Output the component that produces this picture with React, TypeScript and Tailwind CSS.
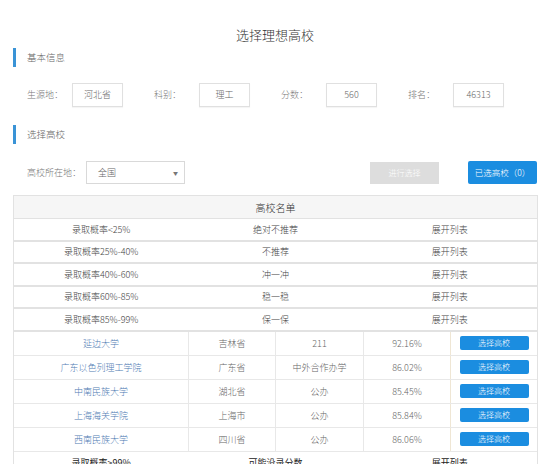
import React from 'react';

const font = { fontFamily: '"Noto Sans CJK SC", "Noto Sans", sans-serif' };

const basics = [
    { label: '生源地：', value: '河北省' },
    { label: '科别：', value: '理工' },
    { label: '分数：', value: '560' },
    { label: '排名：', value: '46313' },
];

const levels = [
    { range: '录取概率<25%', tip: '绝对不推荐' },
    { range: '录取概率25%-40%', tip: '不推荐' },
    { range: '录取概率40%-60%', tip: '冲一冲' },
    { range: '录取概率60%-85%', tip: '稳一稳' },
    { range: '录取概率85%-99%', tip: '保一保' },
];

const schools = [
    { name: '延边大学', province: '吉林省', type: '211', rate: '92.16%' },
    { name: '广东以色列理工学院', province: '广东省', type: '中外合作办学', rate: '86.02%' },
    { name: '中南民族大学', province: '湖北省', type: '公办', rate: '85.45%' },
    { name: '上海海关学院', province: '上海市', type: '公办', rate: '85.84%' },
    { name: '西南民族大学', province: '四川省', type: '公办', rate: '86.06%' },
];

function SectionTitle({ text }: { text: string }) {
    return (
        <div className="flex h-[19px] items-center">
            <div className="ml-[13px] h-full w-[3px] bg-[#3a93d6]" />
            <span className="ml-[11px] text-[9.5px] text-[#666]">{text}</span>
        </div>
    );
}

function LevelRow({ range, tip, last }: { range: string; tip: string; last?: boolean }) {
    return (
        <div
            className={`grid grid-cols-3 items-center border-b-2 border-[#e2e2e2] text-[9px] ${last ? 'h-[23px] font-normal text-[#222]' : 'h-[22.6px] text-[#444]'}`}
        >
            <span className="text-center">{range}</span>
            <span className="text-center">{tip}</span>
            <span className="text-center">展开列表</span>
        </div>
    );
}

export default function App() {
    return (
        <div className="h-[464px] w-[550px] overflow-hidden bg-white font-light" style={font}>
            <h1 className="pt-[26px] text-center text-[13px] leading-[18px] text-[#333]">选择理想高校</h1>

            <div className="mt-[4px]">
                <SectionTitle text="基本信息" />
            </div>

            <div className="mt-[16px] flex h-[24px] pl-[27px]">
                {basics.map((b) => (
                    <div key={b.label} className="flex w-[127px] items-center">
                        <span className="w-[45px] text-[9px] text-[#777]">{b.label}</span>
                        <div className="flex h-[24px] w-[51px] items-center justify-center border border-[#e0e0e0] text-[9px] text-[#666] shadow-[0_1px_1px_rgba(0,0,0,0.04)]">
                            {b.value}
                        </div>
                    </div>
                ))}
            </div>

            <div className="mt-[18px]">
                <SectionTitle text="选择高校" />
            </div>

            <div className="mt-[17px] flex h-[23px] items-center pl-[27px]">
                <span className="w-[59px] text-[9px] text-[#777]">高校所在地：</span>
                <div className="flex h-[23px] w-[99px] items-center justify-between border border-[#d9d9d9] pl-[11px] pr-[6px] text-[9px] text-[#666]">
                    <span>全国</span>
                    <span className="text-[5px] text-[#777]">▼</span>
                </div>
                <div className="ml-[185px] flex h-[22px] w-[69px] items-center justify-center bg-[#dddddd] text-[8px] text-white">
                    进行选择
                </div>
                <div className="ml-[29px] flex h-[23px] w-[69px] items-center justify-center rounded-[2px] bg-[#1b8de0] text-[8.5px] text-white">
                    已选高校（0）
                </div>
            </div>

            <div className="ml-[13px] mt-[11px] w-[525px] border-x border-[#e2e2e2]">
                <div className="flex h-[24px] items-center justify-center border-y border-[#e2e2e2] bg-[#f6f6f6] text-[10px] text-[#333]">
                    高校名单
                </div>
                {levels.map((l) => (
                    <LevelRow key={l.range} range={l.range} tip={l.tip} />
                ))}
                {schools.map((s) => (
                    <div
                        key={s.name}
                        className="grid h-[24px] grid-cols-[175px_87px_88px_87px_1fr] items-center border-b border-[#e8e8e8] text-[9px] text-[#666]"
                    >
                        <span className="flex h-full items-center justify-center border-r border-[#e8e8e8] text-[#4f7bb3]">{s.name}</span>
                        <span className="flex h-full items-center justify-center border-r border-[#e8e8e8]">{s.province}</span>
                        <span className="flex h-full items-center justify-center border-r border-[#e8e8e8]">{s.type}</span>
                        <span className="flex h-full items-center justify-center border-r border-[#efe6d4]">{s.rate}</span>
                        <span className="flex h-full items-center justify-center">
                            <span className="flex h-[14px] w-[69px] items-center justify-center rounded-[2px] bg-[#1b8de0] text-[8px] text-white">
                                选择高校
                            </span>
                        </span>
                    </div>
                ))}
                <LevelRow range="录取概率>99%" tip="可能没录分数" last />
            </div>
        </div>
    );
}
